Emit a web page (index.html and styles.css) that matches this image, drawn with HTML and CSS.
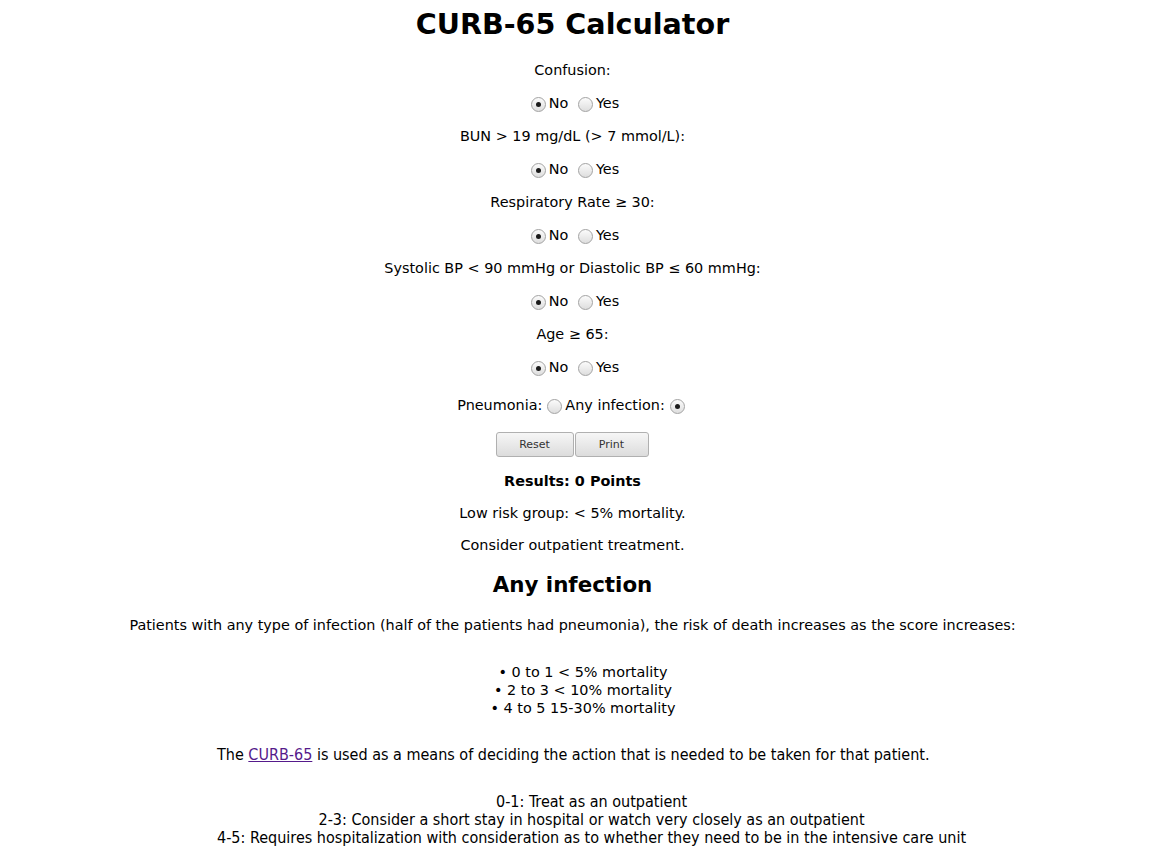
FILE: index.html
```html
<!DOCTYPE html>
<html>
<head>
<meta charset="utf-8">
<title>CURB-65 Calculator</title>
<link rel="stylesheet" href="styles.css">
</head>
<body>
<div class="page">
  <h1 class="title">CURB-65 Calculator</h1>
  <form class="calc">
    <p class="row">Confusion:</p>
    <p class="row"><input type="radio" name="c" checked>No <input type="radio" name="c">Yes</p>
    <p class="row">BUN &gt; 19 mg/dL (&gt; 7 mmol/L):</p>
    <p class="row"><input type="radio" name="u" checked>No <input type="radio" name="u">Yes</p>
    <p class="row">Respiratory Rate ≥ 30:</p>
    <p class="row"><input type="radio" name="r" checked>No <input type="radio" name="r">Yes</p>
    <p class="row">Systolic BP &lt; 90 mmHg or Diastolic BP ≤ 60 mmHg:</p>
    <p class="row"><input type="radio" name="b" checked>No <input type="radio" name="b">Yes</p>
    <p class="row">Age ≥ 65:</p>
    <p class="row"><input type="radio" name="a" checked>No <input type="radio" name="a">Yes</p>
    <p class="row type-row">Pneumonia:<input type="radio" name="t">Any infection:<input type="radio" name="t" checked></p>
    <div class="buttons"><button type="button" class="btn btn-reset">Reset</button><button type="button" class="btn btn-print">Print</button></div>
  </form>
  <p class="result"><b>Results: 0 Points</b></p>
  <p class="line">Low risk group: &lt; 5% mortality.</p>
  <p class="line">Consider outpatient treatment.</p>
  <h2 class="subtitle">Any infection</h2>
  <p class="intro">Patients with any type of infection (half of the patients had pneumonia), the risk of death increases as the score increases:</p>
  <ul class="risk-list">
    <li>0 to 1 &lt; 5% mortality</li>
    <li>2 to 3 &lt; 10% mortality</li>
    <li>4 to 5 15-30% mortality</li>
  </ul>
  <div class="notes">
    <p class="notes-lead">The <a href="#" class="link">CURB-65</a> is used as a means of deciding the action that is needed to be taken for that patient.</p>
    <p class="notes-list">0-1: Treat as an outpatient<br>2-3: Consider a short stay in hospital or watch very closely as an outpatient<br>4-5: Requires hospitalization with consideration as to whether they need to be in the intensive care unit</p>
  </div>
</div>
</body>
</html>
```
FILE: styles.css
```css
html, body {
  background: #ffffff;
}
body {
  margin: 8px;
  font-family: "DejaVu Sans", sans-serif;
  font-size: 14.4px;
  line-height: 18px;
  color: #000;
}
.page {
  width: 1129px;
  text-align: center;
}
.title {
  margin: 0 0 20px;
  font-size: 28.6px;
  line-height: 33px;
  font-weight: bold;
}
.calc {
  margin: 0;
}
.row {
  margin: 0 0 15px;
  height: 18px;
}
.type-row {
  margin-top: 20px;
  margin-bottom: 18px;
}
input[type="radio"] {
  -webkit-appearance: none;
  appearance: none;
  width: 15px;
  height: 15px;
  margin: 0 3px 0 5px;
  box-sizing: border-box;
  border: 1px solid #a3a3a3;
  border-radius: 50%;
  background: linear-gradient(#fbfbfb, #dedede);
  vertical-align: -4px;
  position: relative;
}
input[type="radio"]:checked::after {
  content: "";
  position: absolute;
  left: 4px;
  top: 4px;
  width: 5px;
  height: 5px;
  border-radius: 50%;
  background: #1a1a1a;
}
.buttons {
  display: flex;
  justify-content: center;
  gap: 1px;
  margin-left: -1px;
}
.btn {
  height: 25px;
  box-sizing: border-box;
  padding: 0;
  border: 1px solid #b0b0b0;
  border-radius: 3px;
  background: linear-gradient(#f6f6f6, #dcdcdc);
  font-family: "DejaVu Sans", sans-serif;
  font-size: 11px;
  color: #333;
}
.btn-reset { width: 78px; }
.btn-print { width: 74px; }
.result {
  margin: 15px 0 14px;
}
.line {
  margin: 0 0 14px;
}
.subtitle {
  margin: 18px 0 19px;
  font-size: 21.4px;
  line-height: 25px;
  font-weight: bold;
}
.intro {
  margin: 0 0 29px;
}
.risk-list {
  margin: 0 0 28px;
  padding: 0 0 0 21px;
  list-style: none;
}
.risk-list li::before {
  content: "\2022  ";
}
.notes {
  width: max-content;
  margin-left: 209px;
  font-family: "DejaVu Sans Condensed", "DejaVu Sans", sans-serif;
  font-stretch: condensed;
  font-size: 16px;
}
.notes-lead {
  margin: 0 0 29px;
  padding-top: 1px;
  text-align: left;
}
.notes-list {
  margin: 0;
  text-align: center;
}
.link {
  color: #551a8b;
  text-decoration: underline;
}
```
